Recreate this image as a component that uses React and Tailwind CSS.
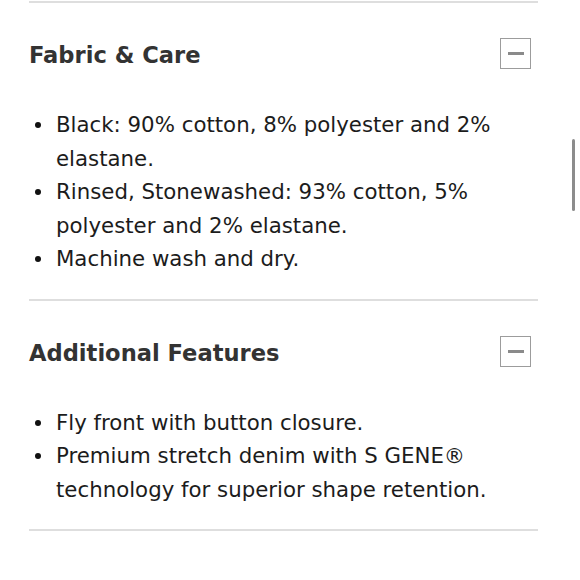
import React from "react";

function MinusBox() {
  return (
    <div className="w-[31px] h-[31px] border-[1.5px] border-[#9c9c9c] flex items-center justify-center mr-[7px]">
      <div className="w-[16px] h-[3px] bg-[#8a8a8a]" />
    </div>
  );
}

function Section({ title, items }) {
  return (
    <div className="border-t-2 border-[#dedede]">
      <div className="flex items-center justify-between h-[31px] mt-[35px]">
        <h2 className="text-[22.6px] font-bold text-[#333] leading-[27px] pt-[4px]">{title}</h2>
        <MinusBox />
      </div>
      <ul className="pt-[39px] pb-[23px] text-[21.3px] leading-[33.5px] text-[#1c1c1c]">
        {items.map((t, i) => (
          <li key={i} className="flex">
            <span className="w-[27px] shrink-0 flex justify-start pl-[6px] pt-[14px]">
              <span className="w-[6px] h-[6px] rounded-full bg-[#111] block" />
            </span>
            <span>{t}</span>
          </li>
        ))}
      </ul>
    </div>
  );
}

export default function App() {
  return (
    <div
      className="relative w-[580px] h-[580px] bg-white overflow-hidden pl-[29px] pr-[42px] pt-[1px]"
      style={{ fontFamily: "'DejaVu Sans', sans-serif" }}
    >
      <Section
        title="Fabric & Care"
        items={[
          "Black: 90% cotton, 8% polyester and 2% elastane.",
          "Rinsed, Stonewashed: 93% cotton, 5% polyester and 2% elastane.",
          "Machine wash and dry.",
        ]}
      />
      <Section
        title="Additional Features"
        items={[
          "Fly front with button closure.",
          "Premium stretch denim with S GENE® technology for superior shape retention.",
        ]}
      />
      <div className="border-t-2 border-[#dedede]" />
      <div className="absolute left-[572px] top-[139px] w-[3px] h-[72px] rounded-full bg-[#8c8c8c]" />
    </div>
  );
}
